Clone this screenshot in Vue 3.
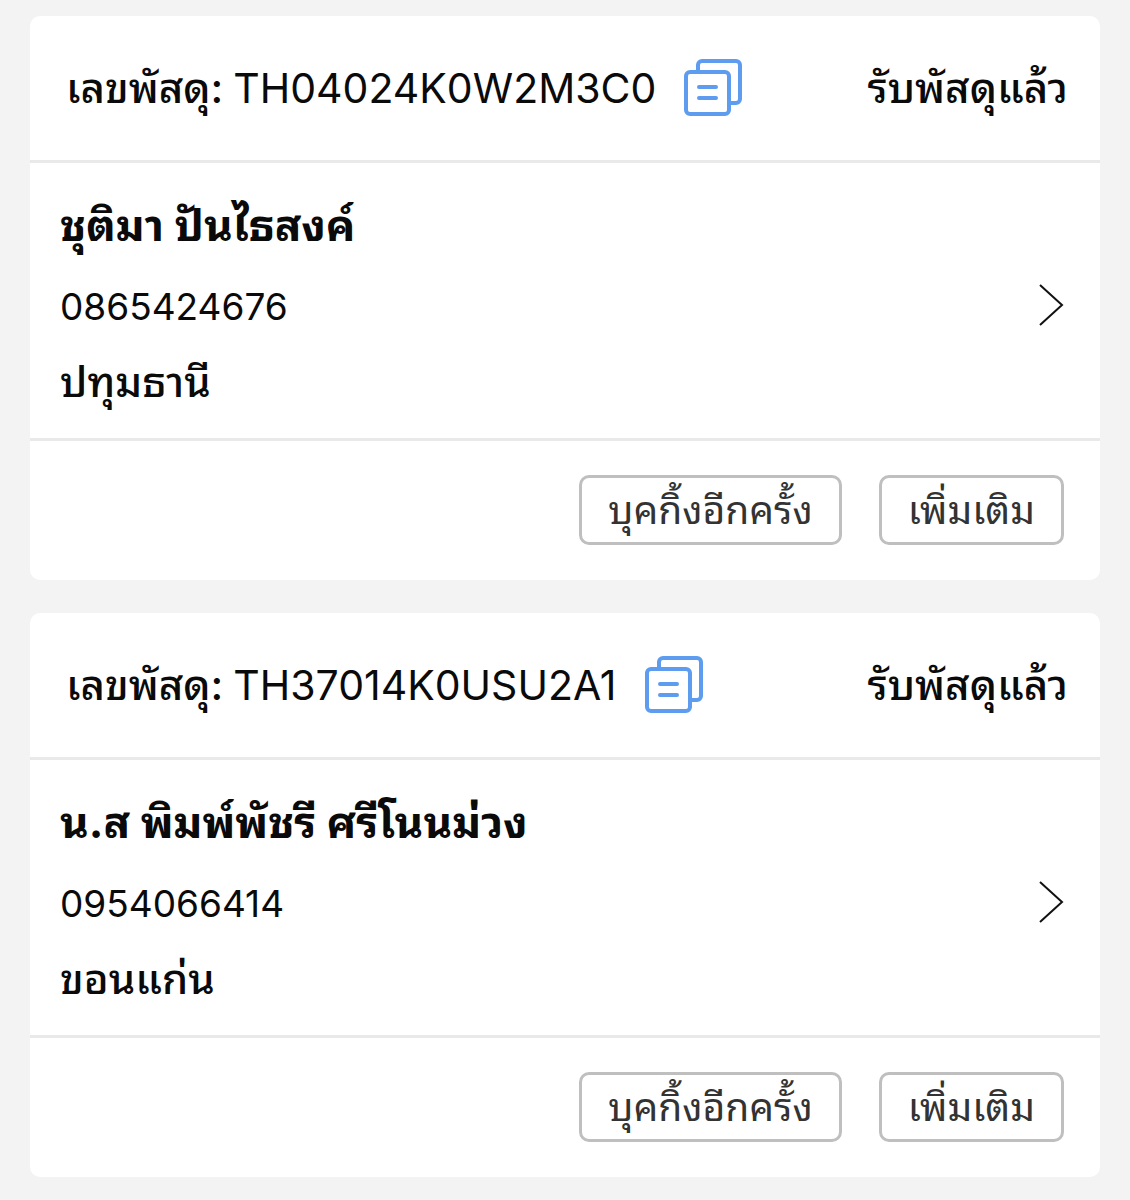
<template>
  <main class="parcels">
    <article v-for="parcel in parcels" :key="parcel.code" class="card">
      <header class="card__head">
        <span class="card__label">เลขพัสดุ:</span>
        <span class="card__code">{{ parcel.code }}</span>
        <button class="copy" type="button" aria-label="คัดลอก">
          <svg viewBox="0 0 60 58" aria-hidden="true">
            <path d="M15 12V6a4 4 0 0 1 4-4h34a4 4 0 0 1 4 4v34a4 4 0 0 1-4 4h-7" />
            <rect x="3" y="13" width="43" height="42" rx="4" />
            <path d="M16 28h17M16 39h17" />
          </svg>
        </button>
        <span class="card__status">รับพัสดุแล้ว</span>
      </header>

      <a class="card__body" href="#">
        <div>
          <h2 class="card__name">{{ parcel.name }}</h2>
          <p class="card__phone">{{ parcel.phone }}</p>
          <p class="card__place">{{ parcel.place }}</p>
        </div>
        <svg class="arrow" viewBox="0 0 26 44" aria-hidden="true">
          <path d="M2 2l22 20L2 42" />
        </svg>
      </a>

      <footer class="card__foot">
        <button class="btn" type="button">บุคกิ้งอีกครั้ง</button>
        <button class="btn" type="button">เพิ่มเติม</button>
      </footer>
    </article>
  </main>
</template>

<script setup>
const parcels = [
  {
    code: "TH04024K0W2M3C0",
    name: "ชุติมา ปันไธสงค์",
    phone: "0865424676",
    place: "ปทุมธานี",
  },
  {
    code: "TH37014K0USU2A1",
    name: "น.ส พิมพ์พัชรี ศรีโนนม่วง",
    phone: "0954066414",
    place: "ขอนแก่น",
  },
];
</script>

<style>
body {
  background: #f3f3f3;
}
</style>

<style scoped>
.parcels {
  display: flex;
  flex-direction: column;
  gap: 33px;
  padding: 16px 30px 24px;
  font-family: Inter, Thonburi, Garuda, Waree, "Noto Sans Thai Looped", "Noto Sans", sans-serif;
  color: #0a0a0a;
}

.card {
  background: #fff;
  border-radius: 10px;
}

.card__head {
  display: flex;
  align-items: center;
  height: 144px;
  padding: 0 32px 0 36px;
  box-sizing: border-box;
  font-size: 42px;
  line-height: 58px;
}

.card__label,
.card__status,
.card__place {
  font-weight: 500;
}

.card__code {
  margin-left: 10px;
  font-size: 41px;
}

.card__status {
  margin-left: auto;
}

.copy {
  margin-left: 27px;
  padding: 0;
  border: 0;
  background: none;
}

svg {
  display: block;
  fill: none;
}

.copy svg {
  width: 60px;
  height: 58px;
  stroke: #5e9cef;
  stroke-width: 4;
  stroke-linecap: round;
}

.card__body {
  display: flex;
  align-items: center;
  justify-content: space-between;
  padding: 22px 36px 14px 30px;
  border-top: 3px solid #e9e9e9;
  border-bottom: 3px solid #e9e9e9;
  color: inherit;
  text-decoration: none;
}

.card__name,
.card__phone,
.card__place {
  margin: 0;
}

.card__name {
  font-size: 44px;
  font-weight: 700;
  line-height: 80px;
}

.card__phone {
  font-size: 37px;
  line-height: 84px;
}

.card__place {
  margin-bottom: 9px;
  font-size: 42px;
  line-height: 66px;
}

.arrow {
  width: 26px;
  height: 44px;
  stroke: #111;
  stroke-width: 2;
}

.card__foot {
  display: flex;
  justify-content: flex-end;
  gap: 37px;
  padding: 34px 36px 35px;
}

.btn {
  height: 70px;
  padding: 0 26px;
  border: 3px solid #bfbfbf;
  border-radius: 10px;
  background: #fff;
  color: #333;
  font: inherit;
  font-size: 39px;
  line-height: 58px;
}
</style>
